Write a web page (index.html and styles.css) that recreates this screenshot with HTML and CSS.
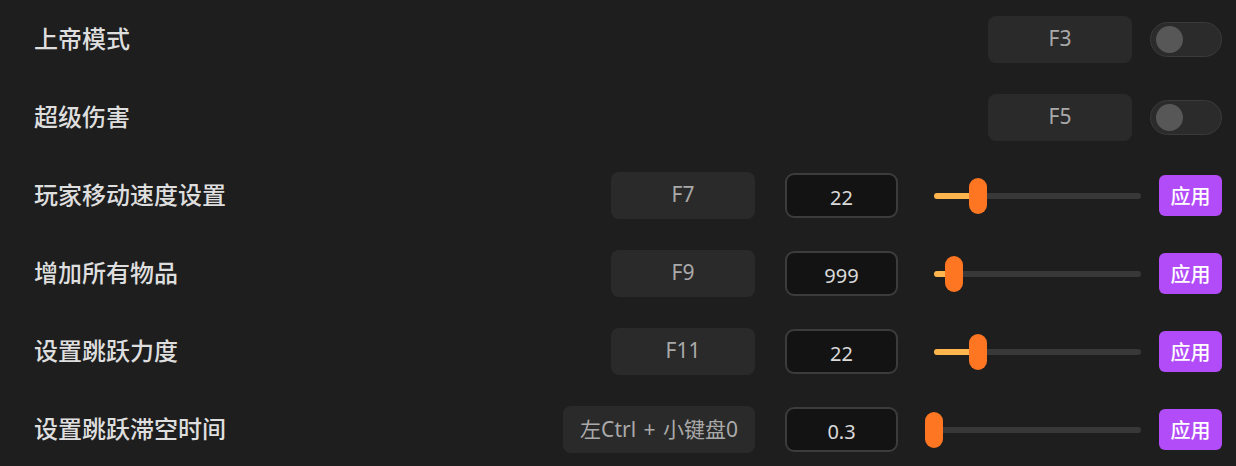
FILE: index.html
```html
<!DOCTYPE html>
<html lang="zh-CN">

<head>
    <meta charset="UTF-8">
    <meta name="viewport" content="width=device-width, initial-scale=1.0">
    <title>修改器</title>

    <link rel="stylesheet" href="styles.css">
</head>

<body>
    <ul class="cheat-list">
        <li class="cheat-row">
            <span class="cheat-name">上帝模式</span>
            <span class="hotkey">F3</span>
            <div class="toggle"><div class="knob"></div></div>
        </li>

        <li class="cheat-row">
            <span class="cheat-name">超级伤害</span>
            <span class="hotkey">F5</span>
            <div class="toggle"><div class="knob"></div></div>
        </li>

        <li class="cheat-row">
            <span class="cheat-name">玩家移动速度设置</span>
            <span class="hotkey">F7</span>
            <input class="value-input" type="text" value="22">
            <div class="slider">
                <div class="slider-fill" style="width: 21.3%"></div>
                <div class="slider-thumb" style="left: 21.3%"></div>
            </div>
            <button class="apply">应用</button>
        </li>

        <li class="cheat-row">
            <span class="cheat-name">增加所有物品</span>
            <span class="hotkey">F9</span>
            <input class="value-input" type="text" value="999">
            <div class="slider">
                <div class="slider-fill" style="width: 9.7%"></div>
                <div class="slider-thumb" style="left: 9.7%"></div>
            </div>
            <button class="apply">应用</button>
        </li>

        <li class="cheat-row">
            <span class="cheat-name">设置跳跃力度</span>
            <span class="hotkey">F11</span>
            <input class="value-input" type="text" value="22">
            <div class="slider">
                <div class="slider-fill" style="width: 21.3%"></div>
                <div class="slider-thumb" style="left: 21.3%"></div>
            </div>
            <button class="apply">应用</button>
        </li>

        <li class="cheat-row">
            <span class="cheat-name">设置跳跃滞空时间</span>
            <span class="hotkey">左Ctrl + 小键盘0</span>
            <input class="value-input" type="text" value="0.3">
            <div class="slider">
                <div class="slider-fill" style="width: 0%"></div>
                <div class="slider-thumb" style="left: 0%"></div>
            </div>
            <button class="apply">应用</button>
        </li>
    </ul>
</body>

</html>
```

FILE: styles.css
```css
* {
    margin: 0;
    padding: 0;
    box-sizing: border-box;
}

body {
    min-height: 100vh;
    background-color: #1e1e1e;
    font-family: "Noto Sans", "Noto Sans CJK SC", sans-serif;
    color: #dcdcdc;
}

ul {
    list-style: none;
}

.cheat-list {
    display: flex;
    flex-direction: column;
    gap: 31px;
    padding: 16px 14px 0 34px;
}

.cheat-row {
    height: 47px;
    display: flex;
    align-items: center;
}

.cheat-name {
    flex: 1;
    padding-bottom: 5px;
    font-size: 24px;
    font-weight: 500;
    color: #dedede;
}

.hotkey {
    min-width: 144px;
    height: 47px;
    padding: 0 17px 3px 17px;
    display: flex;
    align-items: center;
    justify-content: center;
    background-color: #2a2a2a;
    border-radius: 8px;
    font-size: 21px;
    color: #a9a9a9;
    word-spacing: 2px;
}

.toggle {
    margin-left: 18px;
    width: 72px;
    height: 35px;
    padding-left: 5px;
    display: flex;
    align-items: center;
    background-color: #2b2b2b;
    border: 1px solid #3a3a3a;
    border-radius: 18px;
}

.knob {
    width: 27px;
    height: 27px;
    border-radius: 50%;
    background-color: #575757;
}

.value-input {
    margin-left: 30px;
    width: 113px;
    height: 45px;
    padding-top: 3px;
    background-color: #131313;
    border: 2px solid #3c3c3c;
    border-radius: 9px;
    outline: none;
    text-align: center;
    font-family: inherit;
    font-size: 20px;
    color: #dadada;
}

.slider {
    position: relative;
    margin-left: 36px;
    width: 207px;
    height: 6px;
    border-radius: 3px;
    background-color: #383838;
}

.slider-fill {
    height: 100%;
    border-radius: 3px;
    background-color: #ffb54d;
}

.slider-thumb {
    position: absolute;
    top: 50%;
    width: 18px;
    height: 36px;
    border-radius: 9px;
    background-color: #ff7622;
    transform: translate(-50%, -50%);
}

.apply {
    margin-left: 18px;
    width: 63px;
    height: 41px;
    border: none;
    border-radius: 6px;
    background-color: #b24cf9;
    color: white;
    font-family: inherit;
    font-size: 20px;
    font-weight: 500;
    cursor: pointer;
}
```
